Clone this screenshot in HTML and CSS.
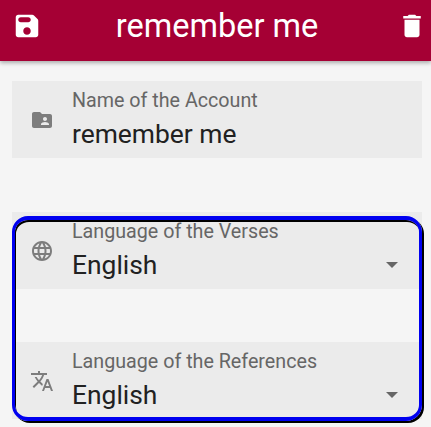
FILE: index.html
```html
<!DOCTYPE html>
<html lang="en">
<head>
<meta charset="utf-8">
<title>remember me</title>
<link rel="stylesheet" href="styles.css">
</head>
<body>
<header class="appbar">
  <svg class="bar-icon" viewBox="0 0 24 24"><path d="M17.59 3.59c-.38-.38-.89-.59-1.42-.59H5c-1.11 0-2 .9-2 2v14c0 1.1.9 2 2 2h14c1.1 0 2-.9 2-2V7.83c0-.53-.21-1.04-.59-1.41l-2.82-2.83zM12 19c-1.66 0-3-1.34-3-3s1.34-3 3-3 3 1.34 3 3-1.34 3-3 3zm1-10H7c-1.1 0-2-.9-2-2s.9-2 2-2h6c1.1 0 2 .9 2 2s-.9 2-2 2z"/></svg>
  <h1 class="title">remember me</h1>
  <svg class="bar-icon" viewBox="0 0 24 24"><path d="M6 19c0 1.1.9 2 2 2h8c1.1 0 2-.9 2-2V7H6v12zM19 4h-3.5l-1-1h-5l-1 1H5v2h14V4z"/></svg>
</header>
<main class="form">
  <div class="field">
    <svg class="field-icon" viewBox="0 0 24 24"><path d="M20 6h-8l-2-2H4c-1.1 0-1.99.9-1.99 2L2 18c0 1.1.9 2 2 2h16c1.1 0 2-.9 2-2V8c0-1.1-.9-2-2-2zm-5 3c1.1 0 2 .9 2 2s-.9 2-2 2-2-.9-2-2 .9-2 2-2zm4 8h-8v-1c0-1.33 2.67-2 4-2s4 .67 4 2v1z"/></svg>
    <div class="field-text">
      <span class="label">Name of the Account</span>
      <span class="value">remember me</span>
    </div>
  </div>
  <section class="group">
    <div class="field">
      <svg class="field-icon" viewBox="0 0 24 24"><path d="M11.99 2C6.47 2 2 6.48 2 12s4.47 10 9.99 10C17.52 22 22 17.52 22 12S17.52 2 11.99 2zm6.93 6h-2.95c-.32-1.25-.78-2.45-1.38-3.56 1.84.63 3.37 1.91 4.33 3.56zM12 4.04c.83 1.2 1.48 2.53 1.91 3.96h-3.82c.43-1.43 1.08-2.76 1.91-3.96zM4.26 14C4.1 13.36 4 12.69 4 12s.1-1.36.26-2h3.38c-.08.66-.14 1.32-.14 2 0 .68.06 1.34.14 2H4.26zm.82 2h2.95c.32 1.25.78 2.45 1.38 3.56-1.84-.63-3.37-1.9-4.33-3.56zm2.95-8H5.08c.96-1.66 2.49-2.93 4.33-3.56C8.81 5.55 8.35 6.75 8.03 8zM12 19.96c-.83-1.2-1.48-2.53-1.91-3.96h3.82c-.43 1.43-1.08 2.76-1.91 3.96zM14.34 14H9.66c-.09-.66-.16-1.32-.16-2 0-.68.07-1.35.16-2h4.68c.09.65.16 1.32.16 2 0 .68-.07 1.34-.16 2zm.25 5.56c.6-1.11 1.06-2.31 1.38-3.56h2.95c-.96 1.65-2.49 2.93-4.33 3.56zM16.36 14c.08-.66.14-1.32.14-2 0-.68-.06-1.34-.14-2h3.38c.16.64.26 1.31.26 2s-.1 1.36-.26 2h-3.38z"/></svg>
      <div class="field-text">
        <span class="label">Language of the Verses</span>
        <span class="value">English</span>
      </div>
      <svg class="arrow" viewBox="0 0 12 6"><path d="M0 0l6 6 6-6z"/></svg>
    </div>
    <div class="field">
      <svg class="field-icon" viewBox="0 0 24 24"><path d="M12.87 15.07l-2.54-2.51.03-.03c1.74-1.94 2.98-4.17 3.71-6.53H17V4h-7V2H8v2H1v1.99h11.17C11.5 7.92 10.44 9.75 9 11.35 8.07 10.32 7.3 9.19 6.69 8h-2c.73 1.63 1.73 3.17 2.98 4.56l-5.09 5.02L4 19l5-5 3.11 3.11.76-2.04zM18.5 10h-2L12 22h2l1.12-3h4.75L21 22h2l-4.5-12zm-2.62 7l1.62-4.33L19.12 17h-3.24z"/></svg>
      <div class="field-text">
        <span class="label">Language of the References</span>
        <span class="value">English</span>
      </div>
      <svg class="arrow" viewBox="0 0 12 6"><path d="M0 0l6 6 6-6z"/></svg>
    </div>
    <div class="highlight"></div>
  </section>
</main>
</body>
</html>
```
FILE: styles.css
```css
* { box-sizing: border-box; }
html, body { margin: 0; height: 100%; overflow: hidden; }
body {
  background: #f5f5f5;
  font-family: Roboto, "Liberation Sans", sans-serif;
}
.appbar {
  height: 61px;
  display: flex;
  align-items: center;
  justify-content: space-between;
  padding: 0 4px 9px 12px;
  background: #a50034;
  color: #fff;
  box-shadow: 0 2px 4px rgba(0, 0, 0, .3);
}
.bar-icon { width: 30px; height: 30px; fill: #fff; }
.title {
  margin: 0 5px 0 0;
  font-size: 32.5px;
  font-weight: 400;
}
.form {
  display: flex;
  flex-direction: column;
  gap: 54px;
  padding: 20px 9px 0 12px;
}
.group {
  position: relative;
  display: flex;
  flex-direction: column;
  gap: 53px;
}
.field {
  height: 77px;
  display: flex;
  align-items: center;
  padding-right: 24px;
  background: #ebebeb;
}
.field-icon {
  flex: none;
  width: 24px;
  height: 24px;
  margin: 0 18px;
  fill: #7d7d7d;
}
.field-text {
  flex: 1;
  display: flex;
  flex-direction: column;
  padding-top: 3px;
}
.label {
  font-size: 19.7px;
  line-height: 22px;
  color: #666;
}
.value {
  margin-top: 3px;
  font-size: 26.4px;
  line-height: 38px;
  color: #212121;
}
.arrow {
  flex: none;
  width: 12px;
  height: 6px;
  margin-top: 28px;
  fill: #666;
}
.highlight {
  position: absolute;
  top: 4px;
  left: 0;
  width: 410px;
  height: 205px;
  border-style: solid;
  border-width: 4px 3px;
  border-color: #0000f0;
  border-radius: 16px;
  box-shadow: 2px 2px 0 #000, inset 1px 2px 0 #000;
}
```
